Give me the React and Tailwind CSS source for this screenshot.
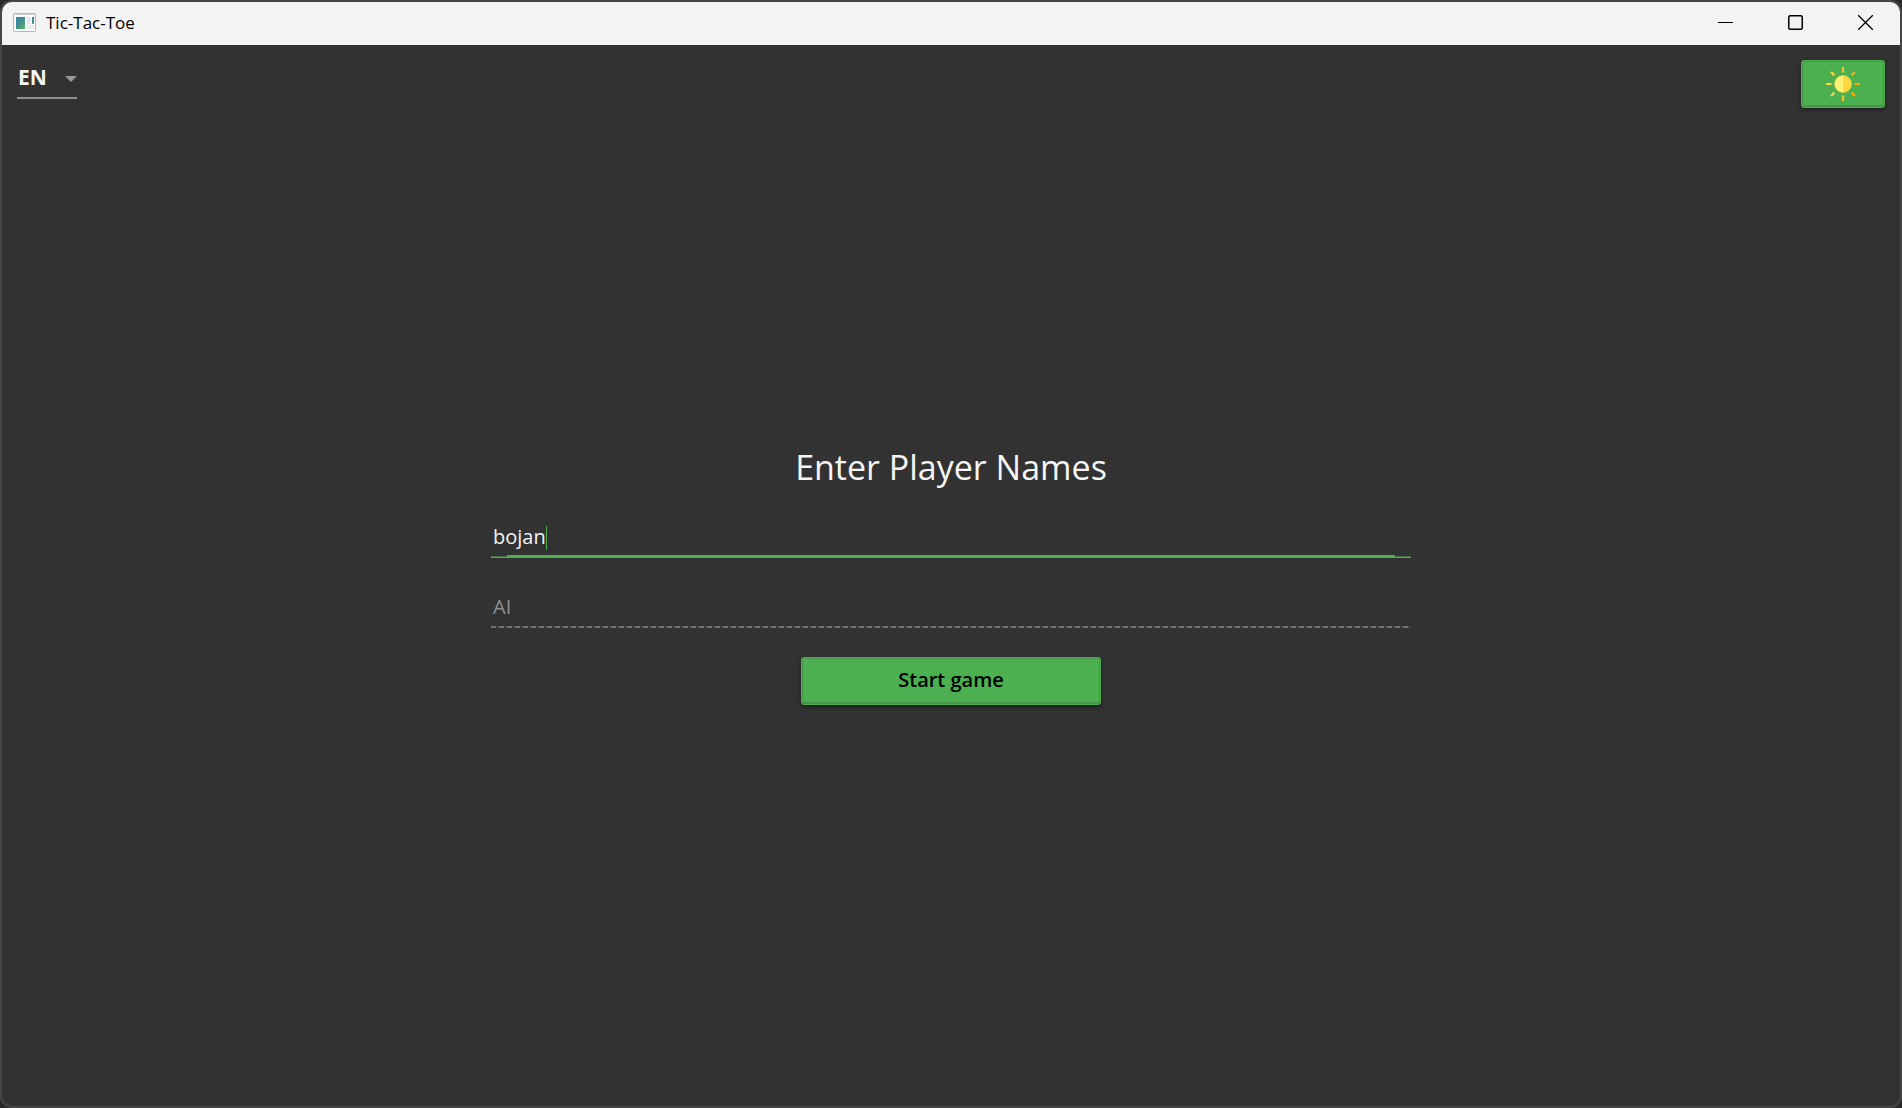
import { useState } from "react";

const rays = [
  ["M17 0v5.5", "#fdc82f"],
  ["M29 5l-3.4 3.4", "#fbb00e"],
  ["M34 17h-5.5", "#ffab00"],
  ["M29 29l-3.4-3.4", "#ffab00"],
  ["M17 34v-5.5", "#fdc82f"],
  ["M5 29l3.4-3.4", "#ffd740"],
  ["M0 17h5.5", "#ffd740"],
  ["M5 5l3.4 3.4", "#ffd740"],
];

function SunIcon() {
  return (
    <svg width="34" height="34" viewBox="0 0 34 34" fill="none" aria-hidden="true">
      {rays.map(([d, color]) => (
        <path key={d} d={d} stroke={color} strokeWidth="2.2" />
      ))}
      <circle cx="17" cy="17" r="8.5" fill="#fff176" />
      <path d="M17 8.5a8.5 8.5 0 0 1 0 17z" fill="#ffd740" />
      <circle cx="17" cy="17" r="8.5" stroke="#d3cf4c" strokeWidth="0.8" />
    </svg>
  );
}

function AppIcon() {
  return (
    <svg width="23" height="19" viewBox="0 0 23 19" aria-hidden="true">
      <defs>
        <linearGradient id="pane" x1="0" y1="0" x2="1" y2="1">
          <stop offset="0" stopColor="#3f7fa6" />
          <stop offset="0.5" stopColor="#3f8f8c" />
          <stop offset="1" stopColor="#62b56c" />
        </linearGradient>
      </defs>
      <rect x="0.5" y="0.5" width="22" height="18" rx="1" fill="#f8f9fa" stroke="#b3b8be" />
      <path d="M1 1.5h21" stroke="#ccd4db" />
      <rect x="3" y="4" width="9" height="12" fill="url(#pane)" />
      <rect x="14" y="4" width="4" height="7" fill="#e6e7e8" />
      <rect x="14" y="12" width="7" height="4" fill="#ebecec" />
      <rect x="19" y="4" width="2" height="7" fill="url(#pane)" />
    </svg>
  );
}

const windowButton = "flex w-[70px] items-center justify-center text-black hover:bg-black/5";
const greenButton =
  "flex h-12 items-center justify-center rounded-[3px] border border-[#4caf50] bg-[#4caf50] text-black shadow-[inset_0_0_0_1px_#46934a,inset_0_-2px_0_#46934a,0_2px_4px_rgba(0,0,0,0.45)]";

function TitleBar() {
  return (
    <header className="flex h-[43px] shrink-0 justify-between bg-[#f3f3f3] pb-[2px]">
      <div className="flex items-center gap-[10px] pl-[11px] text-[17px] text-black">
        <AppIcon />
        <span>Tic-Tac-Toe</span>
      </div>
      <div className="flex">
        <button type="button" aria-label="Minimize" className={windowButton}>
          <svg width="15" height="15" viewBox="0 0 15 15" aria-hidden="true">
            <path d="M0 7.5h15" stroke="currentColor" />
          </svg>
        </button>
        <button type="button" aria-label="Maximize" className={windowButton}>
          <svg width="15" height="15" viewBox="0 0 15 15" fill="none" aria-hidden="true">
            <rect x="0.75" y="0.75" width="13.5" height="13.5" rx="1.5" stroke="currentColor" strokeWidth="1.5" />
          </svg>
        </button>
        <button type="button" aria-label="Close" className={windowButton}>
          <svg width="15" height="15" viewBox="0 0 15 15" aria-hidden="true">
            <path d="M0 0l15 15M15 0L0 15" stroke="currentColor" strokeWidth="1.3" />
          </svg>
        </button>
      </div>
    </header>
  );
}

export default function App() {
  const [name, setName] = useState("bojan");
  return (
    <div className="flex h-screen flex-col bg-[#2a2a2a] font-['Open_Sans','Noto_Sans',sans-serif]">
      <div className="flex grow flex-col overflow-hidden rounded-[12px] border-2 border-[#464646] bg-[#323232]">
        <TitleBar />
        <main className="relative flex grow flex-col items-center justify-center px-4">
          <div className="absolute inset-x-0 top-0 flex items-start justify-between px-[15px] pt-[15px]">
            <div className="relative w-[60px]">
              <select
                aria-label="Language"
                className="h-[39px] w-full appearance-none border-b-2 border-[#8f8f8f] bg-transparent pb-1 pl-[1px] text-[21px] font-bold leading-7 text-[#f5f5f5] outline-none"
              >
                <option>EN</option>
              </select>
              <svg
                className="pointer-events-none absolute top-4 right-0"
                width="12"
                height="6"
                viewBox="0 0 12 6"
                aria-hidden="true"
              >
                <path d="M0 0h12L6 6z" fill="#989898" />
              </svg>
            </div>
            <button type="button" aria-label="Light theme" className={`${greenButton} w-[84px]`}>
              <SunIcon />
            </button>
          </div>

          <h1 className="text-[34px] leading-[42px] text-[#f5f5f5]">Enter Player Names</h1>
          <form className="flex w-full max-w-[920px] flex-col items-center" onSubmit={(e) => e.preventDefault()}>
            <div className="relative mt-8 w-full">
              <input
                aria-label="Player 1"
                value={name}
                onChange={(e) => setName(e.target.value)}
                className="block h-[38px] w-full border-b border-[#4caf50] bg-transparent pb-1 pl-[2px] text-[20px] leading-8 text-[#f5f5f5] outline-none"
              />
              <div className="absolute inset-x-0 bottom-px h-px bg-[#3f7042]" />
              <div className="absolute inset-x-4 bottom-0 h-[3px] bg-[#4caf50]" />
              <div className="pointer-events-none absolute top-[6px] left-0 flex h-6 pl-[2px] text-[20px]" aria-hidden="true">
                <span className="invisible">{name}</span>
                <span className="w-px bg-[#4caf50]" />
              </div>
            </div>
            <div className="mt-8 w-full">
              <input
                aria-label="Player 2"
                value="AI"
                disabled
                className="block h-[36px] w-full bg-transparent pb-1 pl-[2px] text-[20px] leading-8 text-[#8f8f8f]"
              />
              <div className="h-[2px] bg-[repeating-linear-gradient(90deg,#757575_0_5px,#404040_5px_8px)]" />
            </div>
            <button
              type="submit"
              className={`${greenButton} mt-[29px] w-[300px] pb-[2px] text-[20px] font-semibold`}
            >
              Start game
            </button>
          </form>
        </main>
      </div>
    </div>
  );
}
